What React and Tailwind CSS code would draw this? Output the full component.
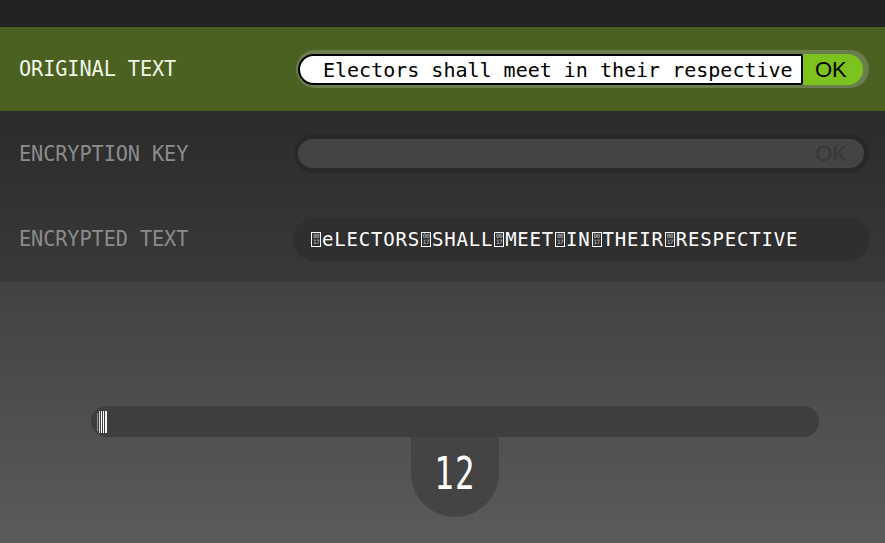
import React from 'react';

const mono = "font-['DejaVu_Sans_Mono',monospace]";
const sans = "font-['Liberation_Sans',Arial,sans-serif]";

const words = ['eLECTORS', 'SHALL', 'MEET', 'IN', 'THEIR', 'RESPECTIVE'];

// missing-glyph box, drawn the way the browser shows an unknown code point
const HexBox = () => (
  <span className="inline-flex flex-col justify-center items-center w-[10px] h-[15px] mx-[1px] border border-white align-[-2px] text-[6px] leading-[6px] tracking-[-0.5px] text-[#c9c9c9]">
    <span>00</span>
    <span>17</span>
  </span>
);

const Thumb = () => (
  <svg width="10" height="22" viewBox="0 0 10 22" className="shrink-0">
    <rect x="0" y="2" width="1" height="18" fill="#8a8a8a" />
    <rect x="2" y="0" width="1" height="22" fill="#d8d8d8" />
    <rect x="4" y="0" width="1" height="22" fill="#ffffff" />
    <rect x="6" y="0" width="1" height="22" fill="#ffffff" />
    <rect x="8" y="0" width="2" height="22" fill="#f0f0f0" />
  </svg>
);

const Label = ({ children, color }) => (
  <div className={`w-[277px] shrink-0 leading-none ${color}`}>
    <span className="inline-block origin-left scale-x-[0.92] text-[22px] tracking-[-0.1px]">{children}</span>
  </div>
);

export default function App() {
  return (
    <div className={`w-[885px] h-[543px] flex flex-col overflow-hidden ${mono}`}>
      <div className="h-[27px] shrink-0 bg-[#232323]" />

      {/* original text */}
      <div className="h-[84px] shrink-0 bg-[#4b6121] flex items-center pl-[19px]">
        <Label color="text-[#eef6e6]">ORIGINAL TEXT</Label>
        <div className="w-[573px] h-[38px] rounded-full bg-[#6a7d4c] flex items-stretch pl-[2px] pr-[6px] pt-[4px] pb-[3px]">
          <input
            readOnly
            value="Electors shall meet in their respective"
            className={`flex-1 min-w-0 bg-white border-2 border-black rounded-l-[16px] rounded-r-[2px] pl-[23px] pr-[2px] text-[20px] text-black outline-none ${mono}`}
          />
          <div className={`w-[60px] bg-[#7dc31f] rounded-r-full flex items-center pl-[12px] text-[22px] text-black leading-none ${sans}`}>
            OK
          </div>
        </div>
      </div>

      <div className="bg-gradient-to-b from-[#2b2b2b] to-[#393939] flex flex-col">
        {/* key */}
        <div className="h-[85px] flex items-center pl-[19px]">
          <div className="w-[275px] shrink-0 leading-none text-[#8c8c8c]">
            <span className="inline-block origin-left scale-x-[0.92] text-[22px] tracking-[-0.1px]">ENCRYPTION KEY</span>
          </div>
          <div className="w-[575px] h-[39px] rounded-full bg-[#282828] px-[4px] py-[5px] pr-[5px]">
            <div className={`h-full rounded-full bg-[#444444] flex items-center justify-end pr-[17px] text-[22px] text-[#363636] leading-none ${sans}`}>
              OK
            </div>
          </div>
        </div>

        {/* encrypted */}
        <div className="h-[86px] flex items-center pl-[19px]">
          <div className="w-[274px] shrink-0 leading-none text-[#8c8c8c]">
            <span className="inline-block origin-left scale-x-[0.92] text-[22px] tracking-[-0.1px]">ENCRYPTED TEXT</span>
          </div>
          <div className="w-[577px] h-[43px] rounded-full bg-[#2f2f2f] flex items-center pl-[17px] text-[19px] tracking-[0.8px] text-white leading-none whitespace-pre">
            {words.map((w) => (
              <React.Fragment key={w}>
                <HexBox />
                {w}
              </React.Fragment>
            ))}
          </div>
        </div>
      </div>

      {/* slider */}
      <div className="flex-1 bg-gradient-to-b from-[#424242] to-[#5b5b5b] flex flex-col items-start pl-[91px] pt-[124px]">
        <div className="w-[728px] h-[31px] rounded-full bg-[#3e3e3e] flex items-center pl-[6px]">
          <Thumb />
        </div>
        <div className="ml-[320px] w-[88px] h-[80px] rounded-b-[44px] bg-[#444444] flex justify-center pt-[14px] text-white leading-none">
          <span className="inline-block scale-x-[0.72] text-[45px] tracking-[2px]">12</span>
        </div>
      </div>
    </div>
  );
}
